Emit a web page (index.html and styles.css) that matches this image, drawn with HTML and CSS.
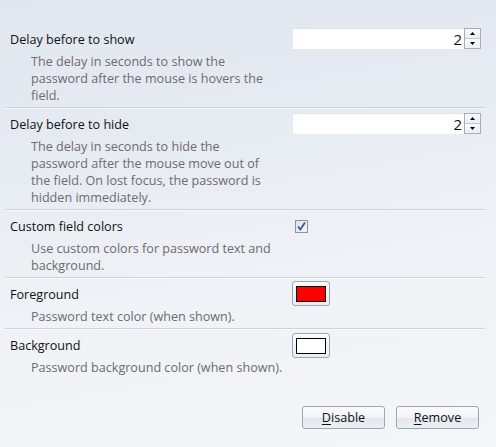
FILE: index.html
```html
<!DOCTYPE html>
<html>
<head>
<meta charset="utf-8">
<link rel="stylesheet" href="styles.css">
</head>
<body>
<div class="panel">
  <div class="row">
    <div class="text">
      <div class="title">Delay before to show</div>
      <div class="desc">The delay in seconds to show the password after the mouse is hovers the field.</div>
    </div>
    <div class="ctrl">
      <div class="spin">
        <div class="spin-field">2</div>
        <div class="spin-btns">
          <div class="spin-up"><svg width="5" height="3" viewBox="0 0 5 3"><path d="M2.5 0L5 3H0z" fill="#000"/></svg></div>
          <div class="spin-down"><svg width="5" height="3" viewBox="0 0 5 3"><path d="M0 0H5L2.5 3z" fill="#000"/></svg></div>
        </div>
      </div>
    </div>
  </div>
  <div class="row">
    <div class="text">
      <div class="title">Delay before to hide</div>
      <div class="desc">The delay in seconds to hide the password after the mouse move out of the field. On lost focus, the password is hidden immediately.</div>
    </div>
    <div class="ctrl">
      <div class="spin">
        <div class="spin-field">2</div>
        <div class="spin-btns">
          <div class="spin-up"><svg width="5" height="3" viewBox="0 0 5 3"><path d="M2.5 0L5 3H0z" fill="#000"/></svg></div>
          <div class="spin-down"><svg width="5" height="3" viewBox="0 0 5 3"><path d="M0 0H5L2.5 3z" fill="#000"/></svg></div>
        </div>
      </div>
    </div>
  </div>
  <div class="row">
    <div class="text">
      <div class="title">Custom field colors</div>
      <div class="desc">Use custom colors for password text and background.</div>
    </div>
    <div class="ctrl">
      <div class="check"><svg width="11" height="11" viewBox="0 0 11 11"><path d="M2 5.5L4.3 8.5L9 1.5" fill="none" stroke="#3c55a8" stroke-width="1.8"/></svg></div>
    </div>
  </div>
  <div class="row">
    <div class="text">
      <div class="title">Foreground</div>
      <div class="desc">Password text color (when shown).</div>
    </div>
    <div class="ctrl">
      <div class="swatch-btn"><div class="swatch swatch-red"></div></div>
    </div>
  </div>
  <div class="row last">
    <div class="text">
      <div class="title">Background</div>
      <div class="desc desc-wide">Password background color (when shown).</div>
    </div>
    <div class="ctrl">
      <div class="swatch-btn swatch-btn-2"><div class="swatch swatch-white"></div></div>
    </div>
  </div>
  <div class="actions">
    <button class="btn"><u>D</u>isable</button>
    <button class="btn"><u>R</u>emove</button>
  </div>
</div>
</body>
</html>
```

FILE: styles.css
```css
html, body {
  margin: 0;
  padding: 0;
}
body {
  width: 496px;
  height: 447px;
  overflow: hidden;
  font-family: "Open Sans", "Noto Sans", sans-serif;
  font-size: 12.6px;
  line-height: 17px;
  background: linear-gradient(170deg, #e1e7f0 0%, #e6ebf2 30%, #eff2f6 60%, #f4f6f8 100%);
}
.panel {
  padding: 23px 0 0 5px;
  width: 480px;
}
.row {
  display: grid;
  grid-template-columns: 287px 193px;
  border-bottom: 1px solid #cdd1d8;
  box-shadow: 0 1px 0 rgba(255,255,255,0.6);
}
.row.last {
  border-bottom: none;
  box-shadow: none;
}
.text {
  padding: 8px 0 3px 5px;
}
.title {
  color: #111;
}
.desc {
  margin-top: 5px;
  margin-left: 21px;
  width: 246px;
  color: #6e6a6e;
}
.desc-wide {
  width: 262px;
}
.ctrl {
  padding-top: 5px;
}
.spin {
  display: flex;
  width: 189px;
  height: 21px;
}
.spin-field {
  flex: 1;
  background: #fff;
  border-top: 1px solid #dfe4ec;
  border-left: 1px solid #e8ecf2;
  text-align: right;
  padding-right: 2px;
  font-size: 15px;
  line-height: 20px;
  color: #111;
}
.spin-btns {
  width: 15px;
  border: 1px solid #a3adbd;
  background: #fff;
  display: flex;
  flex-direction: column;
}
.spin-up, .spin-down {
  flex: 1;
  display: flex;
  align-items: center;
  justify-content: center;
  background: linear-gradient(#fafbfc, #eceff3);
}
.spin-up {
  border-bottom: 1px solid #c3cad5;
}
.check {
  margin: 5px 0 0 3px;
  width: 11px;
  height: 11px;
  border: 1px solid #8e949c;
  background: linear-gradient(135deg, #dfe3e9, #f4f5f7);
  display: flex;
  align-items: center;
  justify-content: center;
}
.swatch-btn {
  margin-top: -2px;
  width: 36px;
  height: 23px;
  border: 1px solid #9ca6b5;
  border-radius: 3px;
  background: linear-gradient(#fbfbfc, #e9edf2);
  display: flex;
  align-items: center;
  justify-content: center;
}
.swatch-btn-2 {
  margin-top: -1px;
}
.swatch {
  width: 28px;
  height: 14px;
  border: 1px solid #000;
}
.swatch-red {
  background: #ff0000;
}
.swatch-white {
  background: #ffffff;
}
.actions {
  display: flex;
  justify-content: flex-end;
  gap: 11px;
  padding-right: 6px;
  margin-top: 27px;
}
.btn {
  width: 83px;
  height: 23px;
  border: 1px solid #9ca6b5;
  border-radius: 3px;
  background: linear-gradient(#fbfbfc 0%, #f1f3f6 50%, #e3e7ed 51%, #eceff3 100%);
  font-family: "Open Sans", "Noto Sans", sans-serif;
  font-size: 12.6px;
  color: #111;
  padding: 0;
  line-height: 20px;
}
.btn u {
  text-decoration-thickness: 1px;
  text-underline-offset: 2px;
}
```
